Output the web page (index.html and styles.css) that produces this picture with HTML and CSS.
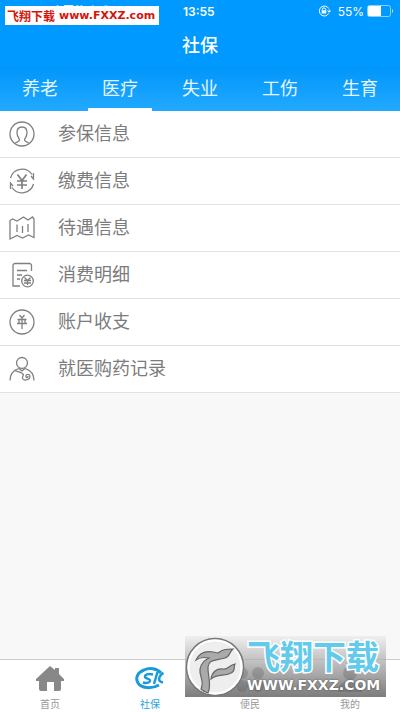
FILE: index.html
```html
<!DOCTYPE html>
<html lang="zh-CN">
<head>
<meta charset="utf-8">
<meta name="viewport" content="width=device-width, initial-scale=1">
<title>社保</title>
<link rel="stylesheet" href="styles.css">
</head>
<body>
<header class="header">
  <div class="status">
    <span class="carrier">中国移动
      <svg width="14" height="10" viewBox="0 0 14 10" fill="none" stroke="#fff" stroke-width="2" aria-hidden="true"><path d="M1 4Q7-1 13 4M4 7Q7 4 10 7"/></svg>
    </span>
    <span class="clock">13:55</span>
    <span class="power">
      <svg width="13" height="12" viewBox="0 0 13 12" fill="none" stroke="#fff" aria-hidden="true"><path d="M10.7 3.5A5 5 0 1 0 10.7 8.5M9.5 5.5l1.7 1.8 1.5-1.8M11.2 7V4.5"/><path d="M4.3 5.5V4.6a1.7 1.7 0 0 1 3.4 0v.9"/><path d="M3.7 5.3h4.6v3.2H3.7z" fill="#fff" stroke="none"/></svg>
      <span class="percent">55%</span>
      <svg width="27" height="12" viewBox="0 0 27 12" aria-hidden="true"><rect x=".5" y=".5" width="23" height="11" rx="2" fill="none" stroke="#8fd0ff"/><path d="M2 1h12v10H2a1 1 0 0 1-1-1V2a1 1 0 0 1 1-1z" fill="#fff"/><path d="M25 4q2 2 0 4z" fill="#d5edff"/></svg>
    </span>
  </div>
  <h1 class="title">社保</h1>
  <div class="badge"><span class="badge-name">飞翔下载</span><span class="badge-url">www.FXXZ.com</span></div>
</header>
<nav class="tabs">
  <button class="tab" type="button">养老</button>
  <button class="tab active" type="button">医疗</button>
  <button class="tab" type="button">失业</button>
  <button class="tab" type="button">工伤</button>
  <button class="tab" type="button">生育</button>
</nav>
<main class="content">
  <ul class="list">
    <li><a class="row" href="#"><svg class="icon" viewBox="0 0 26 26"><circle cx="13" cy="13" r="12"/><path d="M6 22.500c1-2 4.500-1.500 4.500-3.500 0-1.500-2.500-3-2.500-7.500C8 8 10 6 13 6s5 2 5 5.500c0 4.500-2.500 6-2.500 7.500 0 2 3.500 1.500 4.500 3.500"/></svg>参保信息</a></li>
    <li><a class="row" href="#"><svg class="icon" viewBox="0 0 26 26"><path d="M1.500 10A12 12 0 0 1 23 6.500M24.500 16A12 12 0 0 1 3 19.500M24.500 5v6l-2.500-3M1.500 21v-6l2.500 3"/><path class="strong" d="M8.500 6.500l4.500 6 4.500-6M13 12.500V21M8 13h10M8 17h10"/></svg>缴费信息</a></li>
    <li><a class="row" href="#"><svg class="icon" viewBox="0 0 26 26"><path d="M1 5.500L3.500 4 8 6l6.500-4L19 5l4.500-3 1.500 2v18.500l-5.500-2.500-6 3L8 20.500 1 24z"/><path d="M8 9.500V17M13.500 11v7M19 9v8"/></svg>待遇信息</a></li>
    <li><a class="row" href="#"><svg class="icon" viewBox="0 0 26 26"><path d="M22.500 9V3.500a2 2 0 0 0-2-2H6a2 2 0 0 0-2 2V24h7M8 8.500h10M8 13h5M8 17h3"/><circle cx="18.500" cy="19" r="5.800"/><path d="M15.500 15.500l3 3 3-3M18.500 18.500v4.500M15 18.500h7M15 21h7"/></svg>消费明细</a></li>
    <li><a class="row" href="#"><svg class="icon" viewBox="0 0 26 26"><circle cx="13" cy="13" r="12"/><path d="M10.500 6l2.500 3 2.500-3M13 9v11M8.500 10.500h9M8 14.500h10M10 11v3M16 11v3"/></svg>账户收支</a></li>
    <li><a class="row" href="#"><svg class="icon" viewBox="0 0 26 26"><circle cx="13" cy="7" r="5.500"/><path d="M1 24.500c0-7 4-10.500 9-12l3 2.500 3-2.500c5 1.500 9 5 9 12M6 14.500c3 2 7 1 8.500 4.500-2 3-1 5 1.500 5 3.500 0 5-2 5-4s-4-2.500-4 0 2 2 2 0"/></svg>就医购药记录</a></li>
  </ul>
</main>
<footer class="dock">
  <a class="dock-item" href="#"><svg width="30" height="26" viewBox="0 0 30 26" fill="#888" aria-hidden="true"><path d="M15 0l5 4V2h4v6l5 5v2h-3v8q0 2-2 2h-5v-9h-7v9H6q-2 0-2-2v-8H1v-2z"/></svg>首页</a>
  <a class="dock-item current" href="#"><svg width="30" height="26" viewBox="0 0 30 26" fill="none" stroke="#189bd8" aria-hidden="true"><path stroke-width="3" d="M26 7C22 2 14 1.500 9 4 2.500 6.500 0 12 3 17c3 5 13 6.500 21 2"/><path stroke-width="2.500" d="M18 8.500c-5-1-8 0-8 2.200 0 2.500 5.500 1.300 5 4.300-.5 2-4 2.500-7 1.500"/><path stroke-width="2.500" d="M22.500 6l-3.500 12M28.500 7c-2.500 1-4 4-4.500 6 0 2 1.500 3 4 3.500"/></svg>社保</a>
  <a class="dock-item" href="#"><svg width="30" height="26" viewBox="0 0 30 26" fill="#777" aria-hidden="true"><circle cx="7" cy="7" r="6"/><circle cx="23" cy="7" r="6"/><circle cx="7" cy="20" r="6"/><circle cx="23" cy="20" r="6"/></svg>便民</a>
  <a class="dock-item" href="#"><svg width="30" height="26" viewBox="0 0 30 26" fill="#777" aria-hidden="true"><circle cx="15" cy="7" r="7"/><path d="M3 26q0-11 12-11t12 11z"/></svg>我的</a>
  <div class="watermark">
    <svg class="seal" viewBox="0 0 60 60" aria-hidden="true"><circle cx="30" cy="30" r="28.500" fill="#eee" stroke="#777" stroke-width="1.500"/><circle cx="30" cy="30" r="26.500" fill="none" stroke="#fff" stroke-width="2"/><g fill="#aaa" stroke="#666" stroke-width="1.200"><path d="M11 23c4-9 12-10 22-7 5-4 9-4 15-4-4 3-3 8-8 9-10 3-16 1-17 9-.5 9 4 17 0 26-3-1-5-2-7-4 4-8-2-12-1-20 1-6 5-9 9-11-5-1-9-1-13 2z"/><path d="M26 42c1-7 6-11 12-10 5 1 6-4 12-5-2 4 1 7-4 9-7 4-13 0-20 6z"/></g></svg>
    <div class="mark-text"><strong class="mark-name">飞翔下载</strong><span class="mark-url">WWW.FXXZ.COM</span></div>
  </div>
</footer>
</body>
</html>
```
FILE: styles.css
```css
* { box-sizing: border-box; }
body {
  margin: 0;
  min-height: 100vh;
  display: flex;
  flex-direction: column;
  background: #f8f8f8;
  font-family: "Liberation Sans", "Noto Sans CJK SC", sans-serif;
}
a { color: inherit; text-decoration: none; }
.header { position: relative; height: 66px; background: #0099ff; color: #fff; }
.status {
  display: grid;
  grid-template-columns: 131px auto 1fr;
  align-items: center;
  height: 22px;
  padding: 0 6px 0 52px;
  font-size: 12px;
}
.carrier { font-size: 11px; line-height: 22px; white-space: nowrap; }
.clock { font-family: Inter, sans-serif; font-weight: 600; }
.power { display: flex; align-items: center; justify-content: flex-end; gap: 3px; }
.percent { font-family: Inter, sans-serif; margin-left: 4px; }
.title { margin: 0; font-size: 18px; line-height: 48px; font-weight: 500; text-align: center; }
.badge {
  position: absolute;
  left: 5px;
  top: 6px;
  display: flex;
  align-items: center;
  gap: 4px;
  height: 19px;
  padding: 0 4px 0 2px;
  background: #fff;
  color: #d5150c;
  font-weight: 700;
  white-space: nowrap;
}
.badge-name { font-size: 12px; }
.badge-url { font-family: "DejaVu Sans", sans-serif; font-size: 11px; }
.tabs {
  display: grid;
  grid-template-columns: repeat(5, 1fr);
  height: 45px;
  background: linear-gradient(#0096fb, #22a9ff);
}
.tab {
  margin: 0 8px;
  padding: 0;
  border: 0;
  border-bottom: 3px solid transparent;
  background: none;
  color: #e5f5ff;
  font: inherit;
  font-size: 18px;
}
.tab.active { border-bottom-color: #fff; }
.content { flex: 1; }
.list { margin: 0; padding: 0; list-style: none; background: #fff; }
.row {
  display: flex;
  align-items: center;
  gap: 23px;
  height: 47px;
  padding-left: 9px;
  border-bottom: 1px solid #e2e2e2;
  color: #7c7c7c;
  font-size: 18px;
  line-height: 26px;
}
.icon { width: 26px; height: 26px; fill: none; stroke: #808080; stroke-width: 1.3; }
.strong { stroke-width: 1.7; }
.dock {
  position: relative;
  display: grid;
  grid-template-columns: repeat(4, 1fr);
  height: 53px;
  border-top: 1px solid #ccc;
  background: #fff;
}
.dock-item {
  display: flex;
  flex-direction: column;
  align-items: center;
  gap: 5px;
  padding-top: 6px;
  color: #999;
  font-size: 10px;
  line-height: 16px;
}
.current { color: #27a4dc; }
.watermark {
  position: absolute;
  right: 14px;
  bottom: 15px;
  display: flex;
  align-items: center;
  gap: 2px;
  width: 201px;
  height: 61px;
  background: linear-gradient(rgba(230, 230, 230, .5), rgba(165, 165, 165, .8) 50%, rgba(110, 110, 110, .9));
}
.seal { width: 60px; height: 60px; flex: none; }
.mark-text { display: flex; flex-direction: column; white-space: nowrap; }
.mark-name {
  color: #62cbec;
  font-size: 33px;
  line-height: 36px;
  font-weight: 700;
  -webkit-text-stroke: 3px #fff;
  paint-order: stroke fill;
}
.mark-url {
  color: #fff;
  font-family: "DejaVu Sans", sans-serif;
  font-size: 14px;
  font-weight: 700;
  line-height: 18px;
  text-shadow: 0 0 2px #444;
}
```
